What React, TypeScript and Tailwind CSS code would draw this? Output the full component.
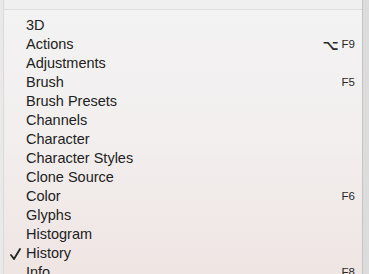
const items: { label: string; shortcut?: string; checked?: boolean }[] = [
  { label: "3D" },
  { label: "Actions", shortcut: "⌥F9" },
  { label: "Adjustments" },
  { label: "Brush", shortcut: "F5" },
  { label: "Brush Presets" },
  { label: "Channels" },
  { label: "Character" },
  { label: "Character Styles" },
  { label: "Clone Source" },
  { label: "Color", shortcut: "F6" },
  { label: "Glyphs" },
  { label: "Histogram" },
  { label: "History", checked: true },
  { label: "Info", shortcut: "F8" },
];

export default function App() {
  return (
    <div className="flex h-[274px] w-[369px] overflow-hidden bg-gradient-to-b from-[#f3f3f3] via-[#f2efee] to-[#efe5e3] font-['Liberation_Sans',Arial,sans-serif] text-[#222]">
      <div className="w-[4px] shrink-0 border-r border-[#dadada] bg-[#e9e9e9]" />
      <div className="flex flex-1 flex-col">
        <div className="h-[10px] shrink-0 border-b border-[#dcdcdc] bg-[#f0f0f0]" />
        <ul className="pt-[6px]">
          {items.map((item) => (
            <li key={item.label} className="flex h-[19px] items-center pr-[7px]">
              <span className="flex w-[22px] shrink-0 pl-[6px]">
                {item.checked && (
                  <svg width="11" height="12" viewBox="0 0 11 12" fill="none">
                    <path d="M1 7 L4 11 L10 1" stroke="#222" strokeWidth="1.8" strokeLinecap="round" strokeLinejoin="round" />
                  </svg>
                )}
              </span>
              <span className="flex-1 text-[14.5px] leading-none">{item.label}</span>
              {item.shortcut && (
                <span className="flex items-center text-[11.5px] leading-none text-[#2a2a2a]">
                  {item.shortcut.startsWith("⌥") ? (
                    <>
                      <span className="mr-[3px] text-[14px] font-bold font-['DejaVu_Sans',sans-serif]">⌥</span>
                      {item.shortcut.slice(1)}
                    </>
                  ) : (
                    item.shortcut
                  )}
                </span>
              )}
            </li>
          ))}
        </ul>
      </div>
      <div className="w-[7px] shrink-0 border-l border-[#c4c4c4] bg-[#dcdcdc]" />
    </div>
  );
}
